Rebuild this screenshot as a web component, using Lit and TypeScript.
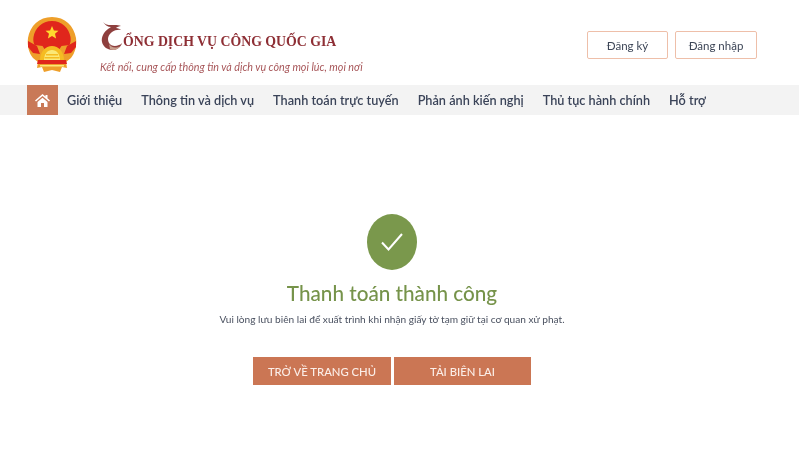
import { LitElement, html, css, svg } from "lit";
import { customElement } from "lit/decorators.js";

const emblem = svg`<svg class="emblem" viewBox="0 0 50 56" width="50" height="56">
  <path d="M25 0C12 0 3 9 1 21c-1 8 1 15 5 20l5 4-1 6 5-1 2 5 8-2 8 2 2-5 5 1-1-6 5-4c4-5 6-12 5-20C47 9 38 0 25 0z" fill="#ee9f2a"/>
  <path d="M25 4C15 4 8 11 6.500 20c-.5 3 0 6 1 8l8 1 2 3h15l2-3 8-1c1-2 1.500-5 1-8C42 11 35 4 25 4z" fill="#e0261c"/>
  <path d="M25 9l1.900 4.400 4.600.4-3.500 3 1.100 4.700-4.100-2.500-4.100 2.500 1.100-4.700-3.500-3 4.600-.4z" fill="#ffd92e"/>
  <path d="M13 43c0-8 5.500-14 12-14s12 6 12 14z" fill="#f5bc22"/>
  <path d="M17 43c0-6 3.500-10 8-10s8 4 8 10z" fill="#fbe877"/>
  <path d="M19 37h12v1.500H19zM17.500 40h15v1.500h-15z" fill="#f5bc22"/>
  <path d="M1 24l9 5 3 8-7-1-5-6z" fill="#e0261c"/>
  <path d="M49 24l-9 5-3 8 7-1 5-6z" fill="#e0261c"/>
  <path d="M11 43h28l1 4H10z" fill="#e0261c"/>
  <path d="M13 48h24v1.500H13z" fill="#fbe877"/>
</svg>`;

@customElement("app-root")
export class AppRoot extends LitElement {
  static styles = css`
    :host {
      display: block;
      width: 799px;
      height: 463px;
      overflow: hidden;
      background: #fff;
      font-family: Lato, sans-serif;
      color: #3d4657;
    }
    .soft { filter: blur(0.5px); height: 100%; }
    header {
      height: 85px;
      box-sizing: border-box;
      display: flex;
      align-items: flex-start;
      padding: 17px 42px 0 27px;
    }
    .emblem { display: block; flex: none; }
    .brand {
      margin-left: 23px;
      display: flex;
      flex-direction: column;
    }
    .title {
      display: flex;
      align-items: flex-end;
      height: 35px;
      font-family: "Liberation Serif", serif;
      color: #8e2f35;
      font-size: 13.800px;
      line-height: 20px;
      font-weight: 700;
      white-space: nowrap;
    }
    .swirl { flex: none; margin-bottom: -1px; }
    .tagline {
      margin-top: 8px;
      font-size: 10.750px;
      line-height: 13px;
      font-style: italic;
      color: #a8575a;
      white-space: nowrap;
    }
    .auth {
      margin-left: auto;
      margin-top: 14px;
      display: flex;
      gap: 7px;
    }
    .auth a {
      width: 82px;
      height: 28px;
      box-sizing: border-box;
      display: flex;
      align-items: center;
      justify-content: center;
      border: 1px solid #eebfa9;
      border-radius: 2px;
      font-size: 11.500px;
      color: #3d4657;
    }
    .auth a:first-child { width: 81px; }
    nav {
      height: 30px;
      background: #f3f3f3;
      display: flex;
      align-items: center;
      padding-left: 27px;
      font-size: 12.700px;
      font-weight: 600;
      color: #3a4358;
      white-space: nowrap;
    }
    .home {
      width: 31px;
      height: 30px;
      background: #c97957;
      display: flex;
      align-items: center;
      justify-content: center;
      margin-right: 9px;
    }
    .links { display: flex; gap: 19px; }
    main {
      display: flex;
      flex-direction: column;
      align-items: center;
      padding-top: 99px;
      margin-left: -15px;
    }
    .circle {
      width: 50px;
      height: 56px;
      border-radius: 50%;
      background: #7a984c;
      display: flex;
      align-items: center;
      justify-content: center;
    }
    h1 {
      margin: 9px 0 0;
      font-size: 20.700px;
      line-height: 28px;
      font-weight: 500;
      color: #76934a;
    }
    p {
      margin: 5px 0 0;
      font-size: 10.150px;
      line-height: 14px;
      color: #4a5160;
    }
    .actions {
      display: flex;
      gap: 3px;
      margin-top: 31px;
    }
    .actions a {
      width: 138px;
      height: 28px;
      background: #cb7654;
      color: #fbeee8;
      display: flex;
      align-items: center;
      justify-content: center;
      font-size: 11.300px;
      font-weight: 500;
    }
    .actions a:last-child { width: 137px; }
  `;

  render() {
    return html`<div class="soft">
      <header>
        ${emblem}
        <div class="brand">
          <div class="title">
            <svg class="swirl" width="23" height="32" viewBox="0 0 23 32">
              <path d="M3 1c3 4 8 3 12 3 2 0 4 0 6 1-2 0-4 1-5 2 2 0 4 1 5 2-3-.5-6 0-9 2-4 3-5 7-3 11 2 3 6 4 10 2 1 0 2-1 3-2-1 4-5 7-9 7-5 0-10-3-11-8-1-5 2-10 6-13 1-1 2-1 3-2-3 0-6-2-8-5z" fill="#8e3f3e"/>
              <path d="M9 23c2 3 6 5 11 2-2 4-7 5-10 3z" fill="#c9a08e"/>
            </svg><span>ỔNG DỊCH VỤ CÔNG QUỐC GIA</span>
          </div>
          <div class="tagline">Kết nối, cung cấp thông tin và dịch vụ công mọi lúc, mọi nơi</div>
        </div>
        <div class="auth"><a>Đăng ký</a><a>Đăng nhập</a></div>
      </header>
      <nav>
        <a class="home">
          <svg width="15" height="13" viewBox="0 0 15 13">
            <path d="M7.500 0L0 6.500l1 1L7.500 2 14 7.500l1-1-2.500-2.200V1h-2v1.600z" fill="#fff"/>
            <path d="M2.500 8l5-4.300 5 4.300v5H9V9H6v4H2.500z" fill="#fff"/>
          </svg>
        </a>
        <div class="links">
          <a>Giới thiệu</a>
          <a>Thông tin và dịch vụ</a>
          <a>Thanh toán trực tuyến</a>
          <a>Phản ánh kiến nghị</a>
          <a>Thủ tục hành chính</a>
          <a>Hỗ trợ</a>
        </div>
      </nav>
      <main>
        <div class="circle">
          <svg width="24" height="20" viewBox="0 0 24 20">
            <path d="M2 10.500l6.500 7L22 2" fill="none" stroke="#fff" stroke-width="2"/>
          </svg>
        </div>
        <h1>Thanh toán thành công</h1>
        <p>Vui lòng lưu biên lai để xuất trình khi nhận giấy tờ tạm giữ tại cơ quan xử phạt.</p>
        <div class="actions"><a>TRỞ VỀ TRANG CHỦ</a><a>TẢI BIÊN LAI</a></div>
      </main>
    </div>`;
  }
}
